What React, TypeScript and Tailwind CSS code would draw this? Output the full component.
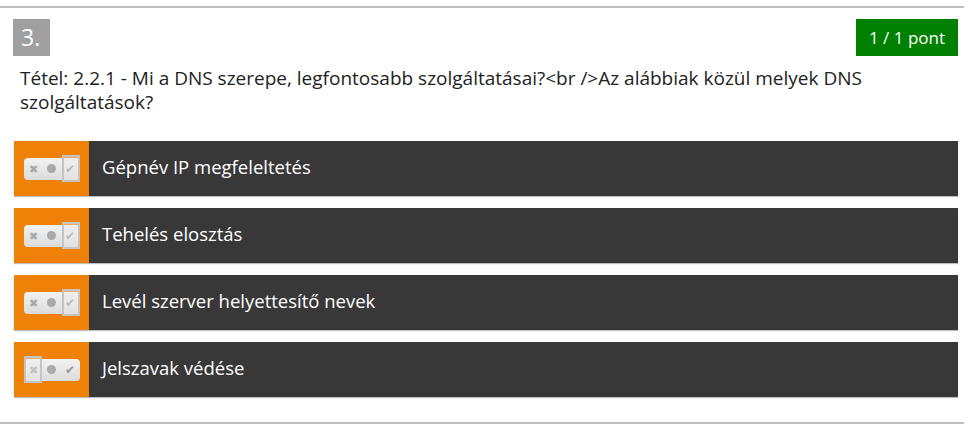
import React from 'react';

const options = [
  { text: 'Gépnév IP megfeleltetés', value: 'yes' },
  { text: 'Tehelés elosztás', value: 'yes' },
  { text: 'Levél szerver helyettesítő nevek', value: 'yes' },
  { text: 'Jelszavak védése', value: 'no' },
];

function Toggle({ value }: { value: 'yes' | 'no' }) {
  return (
    <div className="relative w-[56px] h-[22px] rounded-[4px] bg-gradient-to-b from-[#f2f2f2] to-[#dcdcdc] flex items-center justify-between px-[4px]">
      <span className="w-[12px] text-center text-[11px] leading-none text-[#a8a8a8]">✖</span>
      <span className="w-[9px] h-[9px] rounded-full bg-[#aaaaaa]" />
      <span className="w-[12px] text-center text-[12px] leading-none text-[#9a9a9a]">✔</span>
      <div
        className={
          'absolute top-[-3px] h-[27px] w-[18px] border-2 border-[#c4c4c4] bg-[#ececec]/40 ' +
          (value === 'yes' ? 'right-[0px]' : 'left-[0px]')
        }
      />
    </div>
  );
}

export default function App() {
  return (
    <div className="w-[964px] h-[430px] bg-white pt-[6px]" style={{ fontFamily: '"Open Sans", sans-serif' }}>
      <div className="border-t-2 border-b-2 border-[#bdbdbd] h-[418px] pl-[14px] pr-[6px] pt-[11px]">
        <div className="flex justify-between items-start">
          <div className="ml-[-1px] w-[37px] h-[37px] bg-[#a0a0a0] text-white text-[23px] leading-[37px] pl-[8px]">3.</div>
          <div className="h-[37px] w-[102px] text-center bg-[#008000] text-white text-[17px] leading-[37px]">1 / 1 pont</div>
        </div>
        <p className="mt-[10px] px-[6px] text-[19px] leading-[24px] text-[#222]">
          Tétel: 2.2.1 - Mi a DNS szerepe, legfontosabb szolgáltatásai?&lt;br /&gt;Az alábbiak közül melyek DNS szolgáltatások?
        </p>
        <div className="mt-[27px] flex flex-col gap-[12px]">
          {options.map((o) => (
            <div key={o.text} className="flex h-[55px] bg-[#383838] shadow-[0_1px_1px_rgba(0,0,0,0.25)]">
              <div className="w-[75px] bg-[#ef8108] flex items-center justify-center">
                <Toggle value={o.value as 'yes' | 'no'} />
              </div>
              <div className="flex items-center pl-[13px] pb-[4px] text-white text-[18.5px]">{o.text}</div>
            </div>
          ))}
        </div>
      </div>
    </div>
  );
}
